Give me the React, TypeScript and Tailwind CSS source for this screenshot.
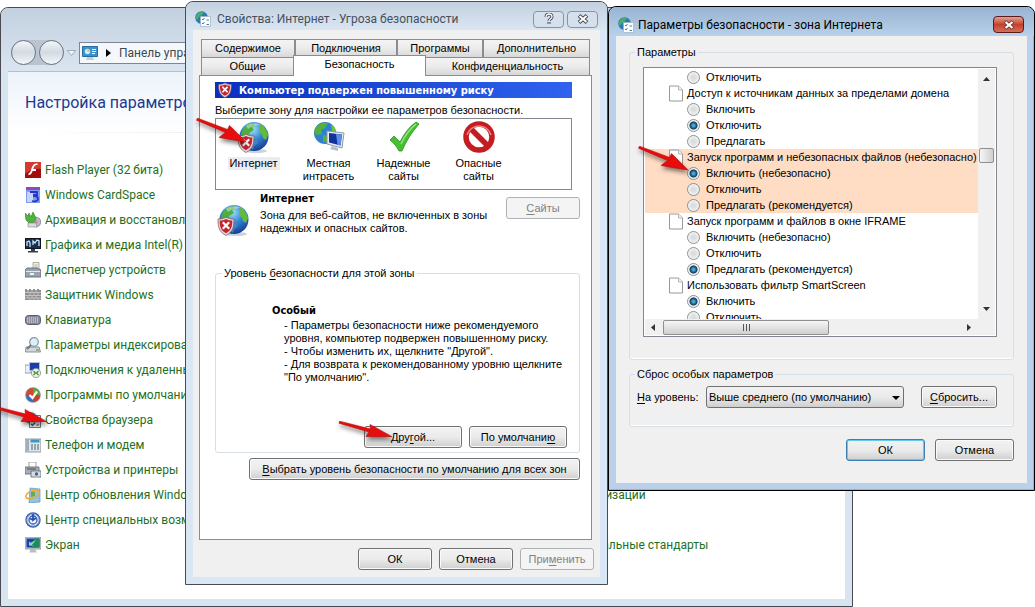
import type { ReactNode } from 'react';
import clsx from 'clsx';

/* ---------- Icons ---------- */

function Globe({ className }: { className?: string }) {
  return (
    <svg viewBox="0 0 32 32" className={className} aria-hidden="true">
      <defs>
        <radialGradient id="globe-sea" cx="0.45" cy="0.25" r="0.8">
          <stop offset="0" stopColor="#9fe0fb" />
          <stop offset="0.45" stopColor="#3588d6" />
          <stop offset="1" stopColor="#10348c" />
        </radialGradient>
      </defs>
      <ellipse cx="18" cy="30" rx="11" ry="2" fill="#c9d3dc" />
      <circle cx="16" cy="15.500" r="14.500" fill="url(#globe-sea)" />
      <path d="M5 8c3-4 7-6 11-6l1 3-3 1 2 3-5 3-1 4-4 1-3-2z" fill="#4fae3a" />
      <path d="M12 17l6 1 2 4-4 3-1 4-3-3z" fill="#3f86c8" />
      <path d="M22 3c4 2 7 6 8 11l-2 5-3-2-1-4-3-1 1-4z" fill="#63bb3c" />
      <path d="M8 5c4-3 10-3 15-1-4 0-9 1-13 4z" fill="#fff" opacity="0.4" />
    </svg>
  );
}

function Shield({ className }: { className?: string }) {
  return (
    <svg viewBox="0 0 20 20" className={className} aria-hidden="true">
      <path d="M10 1c2 1.500 5 2 8 2 0 8-1 13-8 16.500C3 16 2 11 2 3c3 0 6-.5 8-2z" fill="#d8d8dc" stroke="#8a4a4a" strokeWidth="0.700" />
      <path d="M10 3c2 1 4 1.500 6.300 1.600 0 6-1 10-6.300 12.700C4.700 14.600 3.700 10.600 3.700 4.600 6 4.500 8 4 10 3z" fill="#c4242c" />
      <path d="M6.800 6.200l6.400 6.600M13.200 6.200l-6.400 6.600" stroke="#fff" strokeWidth="2.200" />
    </svg>
  );
}

function InternetIcon() {
  return (
    <span className="relative block size-8">
      <Globe className="size-8" />
      <Shield className="absolute bottom-0 left-[-2px] size-5" />
    </span>
  );
}

function IntranetIcon() {
  return (
    <svg viewBox="0 0 32 32" className="size-8" aria-hidden="true">
      <circle cx="12" cy="12" r="11" fill="#2f80ce" />
      <path d="M3 6c3-4 8-5 12-4l-3 5-4 2 1 4-5 1-3-3z" fill="#54b13c" />
      <path d="M10 14l5 1-1 5-4 2z" fill="#54b13c" />
      <path d="M18 3l4 4 1 4-4-1z" fill="#6cc24a" />
      <path d="M14 10l17 2-2 15-15-4z" fill="#e8ebf0" stroke="#8f99a6" />
      <path d="M16 12l13 1.500-1.500 11L16 21.500z" fill="#14309c" />
      <path d="M23 13l6 .6-1.500 11-3-.8z" fill="#5a8ee6" />
      <path d="M19 25l6 2v3l-8-2z" fill="#b7bfca" />
    </svg>
  );
}

function TrustedIcon() {
  return (
    <svg viewBox="0 0 32 32" className="size-8" aria-hidden="true">
      <path d="M2 19l4-4 6 6C16 13 21 6 28 1l3 2C24 11 18 20 14 30h-3C9 26 6 22 2 19z" fill="#45c02f" stroke="#2c8f22" strokeWidth="0.800" />
      <path d="M13 23C17 14 22 8 28 3" stroke="#9be486" strokeWidth="1.500" fill="none" />
    </svg>
  );
}

function RestrictedIcon() {
  return (
    <svg viewBox="0 0 32 32" className="size-8" aria-hidden="true">
      <circle cx="16" cy="16" r="13" fill="#fff" stroke="#c31d22" strokeWidth="5.500" />
      <path d="M7 7l18 18" stroke="#c31d22" strokeWidth="5.500" />
      <path d="M4 14A12.500 12.500 0 0 1 28 14" fill="none" stroke="#ea8a8a" strokeWidth="1.500" />
    </svg>
  );
}

function InternetOptionsIcon() {
  return (
    <svg viewBox="0 0 16 16" className="size-4" aria-hidden="true">
      <circle cx="6.500" cy="6.500" r="6.300" fill="#2a78b8" />
      <path d="M2 3c2-2 5-3 7-2L7 4 4 6 2 9 .5 7z" fill="#49ad6b" />
      <path d="M5.500 5.500h10v10h-10z" fill="#fafcfd" stroke="#9fb2bf" strokeWidth="0.700" />
      <path d="M7 8l1 1 1.500-2M7 12l1 1 1.500-2M11.500 9h2.500M11.500 13.500h2.500" stroke="#3a6f95" strokeWidth="0.900" fill="none" />
    </svg>
  );
}

function PageIcon() {
  return (
    <svg viewBox="0 0 14 17" className="h-[17px] w-[14px] shrink-0" aria-hidden="true">
      <path d="M.5 1h9l4 4v11h-13z" fill="#fff" stroke="#8d8d8d" strokeWidth="0.900" />
      <path d="M9.500 1v4h4" fill="#eee" stroke="#a8a8a8" strokeWidth="0.800" />
    </svg>
  );
}

function ControlPanelIcon() {
  return (
    <svg viewBox="0 0 16 16" className="size-4" aria-hidden="true">
      <path d="M.5 1.500h15v10h-15z" fill="#3a93cf" stroke="#2b6c9e" />
      <circle cx="5.500" cy="6.500" r="2.700" fill="#cfeaf9" />
      <path d="M5.500 3.800v2.700h2.700" fill="#f0a93a" />
      <path d="M10 4.500h4M10 6.500h4M10 8.500h3" stroke="#fff" strokeWidth="1" />
      <path d="M5 12h6l1 3H4z" fill="#c3ced8" />
    </svg>
  );
}

const appletIcons: Record<string, ReactNode> = {
  flash: (
    <>
      <path d="M0 0h16v16H0z" fill="#a30d0d" />
      <path d="M0 0h16v7C10 6 5 8 0 12z" fill="#d53a32" />
      <path d="M12.500 3c-3 0-3.500 2-4.200 4h2.700v2H7.600c-.8 2.500-1.800 4-4.100 4.200v-2c1.500-.2 2-1.500 2.700-3.700C7.200 4 8.500 1.200 12.500 1.200z" fill="#fff" />
    </>
  ),
  card: (
    <>
      <path d="M1 0h14v16H1z" fill="#7f9bef" />
      <path d="M1 0h14v3H1z" fill="#8a4bc0" />
      <path d="M2 5h6v10H2z" fill="#c6d4fb" />
      <path d="M5 5h7v3H9v1c3 0 4 1 4 3s-3 3-6 2" fill="none" stroke="#2434c4" strokeWidth="1.800" />
    </>
  ),
  backup: (
    <>
      <circle cx="11" cy="10" r="4.800" fill="#b9bcc2" stroke="#71757c" strokeWidth="0.700" />
      <circle cx="11" cy="10" r="1.500" fill="#d97b9c" />
      <path d="M0 1l3 3 1-3 2 4 2-5 2 4 1 3-3 4H4L1 8z" fill="#4db53a" stroke="#2e8227" strokeWidth="0.600" />
      <path d="M3 11h8l1 4H3z" fill="#d9dbde" stroke="#83868c" strokeWidth="0.600" />
    </>
  ),
  graphics: (
    <>
      <path d="M0 1h16v11H0z" fill="#10151f" />
      <path d="M1 2h14v9H1z" fill="#16304f" />
      <path d="M2 9V5l2-1 1 2v4M8 8V4l2 2 2-3 2 1v5" fill="none" stroke="#cde8f6" strokeWidth="1.300" />
      <path d="M6 12h4v2h3v1.500H3V14h3z" fill="#3a3f4a" />
    </>
  ),
  device: (
    <>
      <path d="M8 .5h6v8H8z" fill="#eef0ea" stroke="#9a9a90" strokeWidth="0.800" />
      <path d="M9.500 2h3v4h-3z" fill="#d6d3b2" />
      <path d="M0 8l2-2h10l4 2v7H0z" fill="#9aa4b0" stroke="#565e68" strokeWidth="0.800" />
      <path d="M1 9.500h14" stroke="#e4e9ee" />
      <path d="M5 11h4v2H5z" fill="#eef2f6" />
    </>
  ),
  firewall: (
    <>
      <path d="M0 2h2v1h2V2h2v1h2V2h2v1h2V2h2v1h2v10H0z" fill="#8f8f8f" />
      <path d="M0 5.500h16M0 8.500h16M0 11h16M3 3v2.500M7 3v2.500M11 3v2.500M5 5.500v3M9 5.500v3M13 5.500v3M3 8.500V11M7 8.500V11M11 8.500V11M5 11v2M9 11v2M13 11v2" stroke="#d6d6d6" strokeWidth="0.700" />
    </>
  ),
  keyboard: (
    <>
      <rect x="0.500" y="3.500" width="15" height="9" rx="3" fill="#85889a" stroke="#595c6c" />
      <path d="M2 6h12M2 8h12M2 10h12" stroke="#e8e9ef" strokeWidth="1" strokeDasharray="1.200 0.800" />
    </>
  ),
  index: (
    <>
      <path d="M1 10h13l1.500 5H.5z" fill="#d4d7da" stroke="#74787d" strokeWidth="0.800" />
      <circle cx="9" cy="5" r="4.300" fill="#d9effb" stroke="#8c959d" strokeWidth="1.200" />
      <path d="M6 8l-4 4" stroke="#70767d" strokeWidth="1.800" />
      <path d="M11 13h3" stroke="#3d9140" />
    </>
  ),
  remote: (
    <>
      <path d="M0 3h6v8H0z" fill="#eef0f4" stroke="#7d8794" strokeWidth="0.800" />
      <path d="M4 0h11v9H4z" fill="#b9c3d8" />
      <path d="M5 1h9v7H5z" fill="#1c3baf" />
      <circle cx="11" cy="11" r="4.600" fill="#e9efe6" stroke="#879586" strokeWidth="0.800" />
      <path d="M8.500 9l2 2-2 2M13.500 9l-2 2 2 2" stroke="#3a8d3c" strokeWidth="1.200" fill="none" />
    </>
  ),
  programs: (
    <>
      <circle cx="8" cy="8" r="7.800" fill="#8a9299" />
      <path d="M8 8V1A7 7 0 0 0 1 8z" fill="#d7462f" />
      <path d="M8 8H1a7 7 0 0 0 7 7z" fill="#2f6fd0" />
      <path d="M8 8V1a7 7 0 0 1 7 7z" fill="#55a83a" />
      <path d="M8 8h7a7 7 0 0 1-7 7z" fill="#c9402c" />
      <path d="M4.500 8l3 3L12 4.500" stroke="#fff" strokeWidth="2.200" fill="none" />
    </>
  ),
  browser: (
    <>
      <circle cx="6" cy="6" r="6" fill="#5c8f98" />
      <path d="M4.500 3.500h11v12h-11z" fill="#e5eaed" stroke="#69747c" />
      <path d="M6 7l1.500 2L10 5.500M6 12l1.500 1.500L10 10.500M11.500 8.500H14M11.500 13H14" stroke="#3e5561" strokeWidth="1.200" fill="none" />
    </>
  ),
  phone: (
    <>
      <path d="M0 2h16v13H0z" fill="#dde6ec" stroke="#77858f" strokeWidth="0.800" />
      <path d="M1 2h3v12H1z" fill="#9fb0bc" />
      <path d="M5.500 2.500h9v3h-9z" fill="#3f96c2" />
      <path d="M6 8h9M6 10h9M6 12h9" stroke="#52626d" strokeWidth="1.200" strokeDasharray="2 1" />
    </>
  ),
  printer: (
    <>
      <path d="M4 0h7v6H4z" fill="#fff" stroke="#868b92" strokeWidth="0.800" />
      <path d="M0 5h14v7H0z" fill="#a9afb8" stroke="#5a6069" strokeWidth="0.800" />
      <path d="M2 7h9" stroke="#434850" />
      <path d="M6 9h10v6H6z" fill="#d8dce2" stroke="#5a6069" strokeWidth="0.800" />
      <circle cx="11.500" cy="12" r="2.200" fill="#49688c" stroke="#eef2f5" strokeWidth="0.700" />
    </>
  ),
  update: (
    <>
      <path d="M5 1l10 1v13l-11 1z" fill="#8fc3e8" stroke="#5c98c6" strokeWidth="0.700" />
      <path d="M6 4l4 1v4l-4 1z" fill="#67ac4a" />
      <ellipse cx="7.500" cy="7.500" rx="7" ry="3.600" transform="rotate(-22 7.500 7.500)" fill="none" stroke="#eda933" strokeWidth="1.500" />
    </>
  ),
  access: (
    <>
      <circle cx="8" cy="8" r="7.700" fill="#3c62ae" />
      <circle cx="8" cy="8" r="6" fill="#eef3fb" stroke="#92acdb" />
      <circle cx="8" cy="8" r="4" fill="none" stroke="#3159b4" strokeWidth="1.300" />
      <path d="M8 2v6l3-2M8 8L5 6.500" stroke="#2850aa" strokeWidth="1.800" fill="none" />
    </>
  ),
  display: (
    <>
      <path d="M0 0h16v12H0z" fill="#c6ccd0" stroke="#868d93" strokeWidth="0.800" />
      <path d="M1.500 1.500h13v9h-13z" fill="#1a3fb4" />
      <path d="M9 1.500h5.500v9H7z" fill="#1f8a62" />
      <path d="M4 8.500V4.500l1.500 1.300L11 3 7 8l1.500 1z" fill="#7de884" />
      <path d="M6 12h4l2 3.500H4z" fill="#b9bec2" />
    </>
  ),
};

/* ---------- Shared controls ---------- */

// "&" marks the underlined access key
function Mnemonic({ text }: { text: string }) {
  const at = text.indexOf('&');
  if (at < 0) return <>{text}</>;
  return (
    <>
      {text.slice(0, at)}
      <span className="underline underline-offset-2">{text[at + 1]}</span>
      {text.slice(at + 2)}
    </>
  );
}

interface ButtonProps {
  text: string;
  className?: string;
  disabled?: boolean;
  primary?: boolean;
}

function DialogButton({ text, className, disabled, primary }: ButtonProps) {
  return (
    <button
      type="button"
      disabled={disabled}
      className={clsx(
        'h-[22px] shrink-0 rounded-[3px] border whitespace-nowrap',
        disabled
          ? 'border-[#adb2b5] bg-[#f4f4f4] text-[#838383]'
          : 'bg-linear-to-b from-[#f2f2f2] via-[#ebebeb] via-50% to-[#cfcfcf]',
        !disabled && (primary ? 'border-[#3c7fb1] shadow-[inset_0_0_0_1px_#5fc9ee]' : 'border-[#707070] shadow-[inset_0_0_0_1px_#fafafa]'),
        className,
      )}
    >
      <Mnemonic text={text} />
    </button>
  );
}

function RedArrow({ className, shallow }: { className?: string; shallow?: boolean }) {
  return (
    <svg viewBox="0 0 56 28" className={clsx('pointer-events-none absolute z-40 h-7 w-14 drop-shadow-[1px_3px_2px_rgba(0,0,0,0.5)]', className)} aria-hidden="true">
      <path
        d={shallow ? 'M2 2.200L2.500.2 33.500 8l-.5-4.500L55 15.700 29 15.500l3-4.500z' : 'M1.500 2.200L2.500.2 32.500 11.500 34.500 7.500 51 24 24 19.500l6.500-5z'}
        fill="#e80c0c"
        stroke="#b40c0c"
        strokeWidth="0.600"
      />
    </svg>
  );
}

/* ---------- Control panel window ---------- */

const applets = [
  { icon: 'flash', label: 'Flash Player (32 бита)' },
  { icon: 'card', label: 'Windows CardSpace' },
  { icon: 'backup', label: 'Архивация и восстановление' },
  { icon: 'graphics', label: 'Графика и медиа Intel(R)' },
  { icon: 'device', label: 'Диспетчер устройств' },
  { icon: 'firewall', label: 'Защитник Windows' },
  { icon: 'keyboard', label: 'Клавиатура' },
  { icon: 'index', label: 'Параметры индексирования' },
  { icon: 'remote', label: 'Подключения к удаленным' },
  { icon: 'programs', label: 'Программы по умолчанию' },
  { icon: 'browser', label: 'Свойства браузера' },
  { icon: 'phone', label: 'Телефон и модем' },
  { icon: 'printer', label: 'Устройства и принтеры' },
  { icon: 'update', label: 'Центр обновления Windows' },
  { icon: 'access', label: 'Центр специальных возможностей' },
  { icon: 'display', label: 'Экран' },
];

function ControlPanelWindow() {
  return (
    <section className="absolute top-[7px] bottom-0 left-0 flex w-[853px] flex-col rounded-t-lg border border-[#4a4a52] bg-[#d9e4f1] px-[7px] pb-[7px] font-['Roboto','Noto_Sans',sans-serif] text-xs">
      <header className="-mx-[7px] flex h-[63px] items-end rounded-t-lg bg-linear-to-b from-[#c3d0df] to-[#dae5f1] pr-4 pb-1.5 pl-2.5">
        <div className="flex flex-1 items-center">
          <div className="flex gap-[3px] rounded-full bg-[#b9c4d0]">
            <button type="button" aria-label="Назад" className="size-[25px] rounded-full border border-[#6c7682] bg-linear-to-b from-[#f3f6f9] via-[#d3dae2] to-[#f3f7fa]" />
            <button type="button" aria-label="Вперед" className="size-[25px] rounded-full border border-[#6c7682] bg-linear-to-b from-[#f3f6f9] via-[#d3dae2] to-[#f3f7fa]" />
          </div>
          <svg viewBox="0 0 9 6" className="mx-[3px] h-1.5 w-[9px]" aria-hidden="true">
            <path d="M.5.5h8l-4 5z" fill="#f4f8fb" stroke="#8799ab" strokeWidth="0.800" />
          </svg>
          <div className="flex h-[22px] flex-1 items-center border border-[#7d8793] bg-[#f4f8fc] pl-0.5 text-[#3f4750]">
            <ControlPanelIcon />
            <svg viewBox="0 0 5 8" className="mr-2 ml-2 h-2 w-[5px]" aria-hidden="true">
              <path d="M0 0l5 4-5 4z" fill="#000" />
            </svg>
            Панель управления
          </div>
        </div>
      </header>
      <main className="flex-1 border-t border-[#b4c0cd] bg-white">
        <div className="bg-linear-to-b from-[#edf3fb] to-white pt-[19px] pl-[17px]">
          <h1 className="text-base leading-6 text-[#1a3b8f]">Настройка параметров компьютера</h1>
          <div className="mt-[17px] h-px bg-linear-to-r from-white via-[#d5dbe2] to-white" />
        </div>
        <div className="grid grid-cols-[476px_1fr] pt-6 pl-[17px]">
          <ul>
            {applets.map(({ icon, label }) => (
              <li key={icon} className="flex h-[25px] items-center gap-1">
                <svg viewBox="0 0 16 16" className="size-4 shrink-0" aria-hidden="true">
                  {appletIcons[icon]}
                </svg>
                <a href="#" className="whitespace-nowrap text-[#1e7022]">{label}</a>
              </li>
            ))}
          </ul>
          <ul className="grid auto-rows-[25px] pl-5">
            <li className="row-start-14 flex items-center">
              <a href="#" className="text-[#1e7022]">Центр синхронизации</a>
            </li>
            <li className="row-start-16 flex items-center">
              <a href="#" className="text-[#1e7022]">Язык и региональные стандарты</a>
            </li>
          </ul>
        </div>
      </main>
    </section>
  );
}

/* ---------- Internet properties window ---------- */

const zones = [
  { label: 'Интернет', icon: <InternetIcon />, active: true },
  { label: 'Местная интрасеть', icon: <IntranetIcon /> },
  { label: 'Надежные сайты', icon: <TrustedIcon /> },
  { label: 'Опасные сайты', icon: <RestrictedIcon /> },
];

function Tab({ label, active }: { label: string; active?: boolean }) {
  return (
    <button
      type="button"
      role="tab"
      aria-selected={!!active}
      className={clsx(
        'border border-b-0 border-[#898c95]',
        active ? 'z-10 -mx-px -mt-0.5 -mb-px bg-white pb-1' : 'bg-linear-to-b from-[#f4f4f4] via-[#ebebeb] via-50% to-[#d8d8d8]',
      )}
    >
      {label}
    </button>
  );
}

function PropertiesWindow() {
  return (
    <section className="absolute top-px left-[185px] z-10 w-[423px] rounded-t-lg border border-[#4a4a52] bg-[#d9e6f3] px-[7px] pb-[7px]">
      <header className="-mx-[7px] flex h-7 items-center rounded-t-lg bg-linear-to-b from-[#c3d0df] to-[#dae6f2] px-[9px] pt-1.5 font-['Roboto','Noto_Sans',sans-serif] text-xs text-[#46505c]">
        <InternetOptionsIcon />
        <h2 className="ml-1.5 flex-1">Свойства: Интернет - Угроза безопасности</h2>
        <div className="flex gap-[3px]">
          <button type="button" aria-label="Справка" className="flex h-[17px] w-[31px] items-center justify-center rounded-sm border border-[#8794a3] bg-[#d5e0ec]">
            <svg viewBox="0 0 10 12" className="h-3 w-2.5" aria-hidden="true">
              <path d="M2 4c0-4 6-4 6 0 0 2-3 2-3 4M5 9v2" stroke="#3f4852" strokeWidth="3" fill="none" />
              <path d="M2 4c0-4 6-4 6 0 0 2-3 2-3 4M5 9.500v1.300" stroke="#fff" strokeWidth="1.300" fill="none" />
            </svg>
          </button>
          <button type="button" aria-label="Закрыть" className="flex h-[17px] w-[31px] items-center justify-center rounded-sm border border-[#8794a3] bg-[#d5e0ec]">
            <svg viewBox="0 0 12 10" className="h-2.5 w-3" aria-hidden="true">
              <path d="M2 1.500l8 7M10 1.500l-8 7" stroke="#3f4852" strokeWidth="3.800" />
              <path d="M2.500 2l7 6M9.500 2l-7 6" stroke="#fff" strokeWidth="2" />
            </svg>
          </button>
        </div>
      </header>

      <div className="bg-[#f0f0f0] px-1.5 pt-[9px] pb-[7px]">
        <div role="tablist" className="mr-1 ml-0.5">
          <div className="grid h-[18px] grid-cols-[94fr_102fr_86fr_107fr]">
            <Tab label="Содержимое" />
            <Tab label="Подключения" />
            <Tab label="Программы" />
            <Tab label="Дополнительно" />
          </div>
          <div className="grid h-[18px] grid-cols-[93fr_131fr_165fr]">
            <Tab label="Общие" />
            <Tab label="Безопасность" active />
            <Tab label="Конфиденциальность" />
          </div>
        </div>

        <div role="tabpanel" className="mr-0.5 flex flex-col border border-[#898c95] bg-white pt-1.5 pr-[11px] pb-[59px] pl-[15px]">
          <div className="mr-2 flex h-4 items-center gap-1.5 bg-linear-to-r from-[#0a2fc0] to-[#2f62ee] pl-0.5 font-['DejaVu_Sans_Condensed',sans-serif] font-bold text-white">
            <Shield className="size-4" />
            <p>Компьютер подвержен повышенному риску</p>
          </div>
          <p className="mt-1 leading-4">Выберите зону для настройки ее параметров безопасности.</p>
          <div className="mr-2 flex h-[72px] items-start border border-[#828790] pt-0.5">
            {zones.map(({ label, icon, active }) => (
              <button key={label} type="button" className="flex w-[75px] flex-col items-center gap-1 px-2">
                {icon}
                <span className={clsx('px-0.5', active && 'bg-[#ebebf2]')}>{label}</span>
              </button>
            ))}
          </div>

          <div className="flex">
            <div className="mt-3.5 mr-2.5 ml-[3px]">
              <InternetIcon />
            </div>
            <div className="flex-1 pt-0.5">
              <h3 className="font-['DejaVu_Sans_Condensed',sans-serif] font-bold">Интернет</h3>
              <p className="mt-1 whitespace-nowrap">
                Зона для веб-сайтов, не включенных в зоны
                <br />
                надежных и опасных сайтов.
              </p>
            </div>
            <DialogButton text="&Сайты" disabled className="mt-[7px] w-[74px]" />
          </div>

          <fieldset className="mt-[31px] min-w-0 rounded-[3px] border border-[#d5dfe5] pr-3 pb-1">
            <legend className="ml-1.5 px-0.5">
              <Mnemonic text="Уровень &безопасности для этой зоны" />
            </legend>
            <div className="pt-6 pl-14">
              <h3 className="font-['DejaVu_Sans_Condensed',sans-serif] font-bold">Особый</h3>
              <p className="mt-0.5 pl-3 whitespace-nowrap">
                - Параметры безопасности ниже рекомендуемого
                <br />
                уровня, компьютер подвержен повышенному риску.
                <br />
                - Чтобы изменить их, щелкните "Другой".
                <br />
                - Для возврата к рекомендованному уровню щелкните
                <br />
                "По умолчанию".
              </p>
            </div>
            <div className="mt-[42px] flex justify-end gap-[7px]">
              <DialogButton text="Дру&гой..." className="w-[98px]" />
              <DialogButton text="По умолчани&ю" className="w-[98px]" />
            </div>
          </fieldset>
          <DialogButton text="&Выбрать уровень безопасности по умолчанию для всех зон" className="mt-[5px] w-[331px] self-end" />
        </div>

        <footer className="mt-2 flex justify-end gap-[7px]">
          <DialogButton text="ОК" className="w-[74px]" />
          <DialogButton text="Отмена" className="w-[74px]" />
          <DialogButton text="При&менить" disabled className="w-[74px]" />
        </footer>
      </div>
    </section>
  );
}

/* ---------- Security settings window ---------- */

interface SettingGroup {
  title?: string;
  options: string[];
  selected: number;
  highlighted?: boolean;
}

const settings: SettingGroup[] = [
  { options: ['Отключить'], selected: -1 },
  { title: 'Доступ к источникам данных за пределами домена', options: ['Включить', 'Отключить', 'Предлагать'], selected: 1 },
  {
    title: 'Запуск программ и небезопасных файлов (небезопасно)',
    options: ['Включить (небезопасно)', 'Отключить', 'Предлагать (рекомендуется)'],
    selected: 0,
    highlighted: true,
  },
  {
    title: 'Запуск программ и файлов в окне IFRAME',
    options: ['Включить (небезопасно)', 'Отключить', 'Предлагать (рекомендуется)'],
    selected: 2,
  },
  { title: 'Использовать фильтр SmartScreen', options: ['Включить', 'Отключить'], selected: 0 },
];

function SettingsTree() {
  return (
    <div className="h-[250px] min-w-0 flex-1 overflow-hidden">
      {settings.map((group, g) => (
        <div key={g} className={clsx(group.highlighted && 'bg-[#ffdcc4]')}>
          {group.title && (
            <div className="flex h-4 items-center gap-1 pl-6 whitespace-nowrap">
              <PageIcon />
              {group.title}
            </div>
          )}
          {group.options.map((option, i) => (
            <label key={option} className="flex h-4 items-center gap-1.5 pl-[42px] whitespace-nowrap">
              <input
                type="radio"
                name={`setting-${g}`}
                defaultChecked={i === group.selected}
                className="size-[13px] shrink-0 appearance-none rounded-full border border-[#8e8f8f] bg-radial from-[#d5d9dc] to-[#f6f6f6] shadow-[inset_0_0_0_1px_#f4f4f4] checked:from-[#4fb0d8] checked:from-10% checked:via-[#123f63] checked:via-45% checked:to-[#f4f4f4] checked:to-60%"
              />
              {option}
            </label>
          ))}
        </div>
      ))}
    </div>
  );
}

function SecurityWindow() {
  return (
    <section className="absolute top-1.5 left-[608px] z-20 w-[427px] rounded-t-lg border border-black bg-[#b9d1ea] px-[7px] pb-[7px] shadow-[inset_-1px_-1px_0_#5fc8e6]">
      <header className="-mx-[7px] flex h-[29px] items-center rounded-t-lg bg-linear-to-b from-[#98b4d2] to-[#b9d1ea] pt-1.5 pr-2.5 pl-[9px] font-['Roboto','Noto_Sans',sans-serif] text-xs">
        <InternetOptionsIcon />
        <h2 className="ml-1 flex-1">Параметры безопасности - зона Интернета</h2>
        <button type="button" aria-label="Закрыть" className="flex h-[17px] w-[31px] items-center justify-center rounded-sm border border-[#5a1a18] bg-linear-to-b from-[#e0a095] via-[#c4402c] via-50% to-[#d4705a]">
          <svg viewBox="0 0 12 10" className="h-2.5 w-3" aria-hidden="true">
            <path d="M2 1.500l8 7M10 1.500l-8 7" stroke="#5c3434" strokeWidth="3.600" />
            <path d="M2.500 2l7 6M9.500 2l-7 6" stroke="#fff" strokeWidth="2.200" />
          </svg>
        </button>
      </header>

      <div className="bg-[#f0f0f0] px-[13px] pt-2.5 pb-[22px]">
        <fieldset className="min-w-0 rounded-[3px] border border-[#d5dfe5] pt-2 pr-4 pb-[22px] pl-[13px] shadow-[inset_0_-1px_0_#fff]">
          <legend className="-ml-2 px-0.5">Параметры</legend>
          <div className="border border-[#828790] bg-white p-px">
            <div className="flex">
              <SettingsTree />
              <div className="flex w-[17px] shrink-0 flex-col items-center bg-[#f0f0f0] py-2">
                <svg viewBox="0 0 7 4" className="h-1 w-[7px]" aria-hidden="true">
                  <path d="M3.500 0L7 4H0z" fill="#333" />
                </svg>
                <div className="mt-[67px] h-[15px] w-[15px] rounded-xs border border-[#8f8f8f] bg-linear-to-r from-[#f6f6f6] to-[#cfcfcf]" />
                <svg viewBox="0 0 7 4" className="mt-auto h-1 w-[7px]" aria-hidden="true">
                  <path d="M3.500 4L7 0H0z" fill="#333" />
                </svg>
              </div>
            </div>
            <div className="flex h-4 items-center bg-[#f0f0f0] pl-1.5">
              <svg viewBox="0 0 4 7" className="mr-2 h-[7px] w-1" aria-hidden="true">
                <path d="M0 3.500L4 0v7z" fill="#333" />
              </svg>
              <div className="flex h-[15px] w-[166px] items-center justify-center gap-0.5 rounded-xs border border-[#8f8f8f] bg-linear-to-b from-[#f6f6f6] to-[#cfcfcf]">
                <span className="h-[7px] w-px bg-[#555]" />
                <span className="h-[7px] w-px bg-[#555]" />
                <span className="h-[7px] w-px bg-[#555]" />
              </div>
              <svg viewBox="0 0 4 7" className="mr-6 ml-auto h-[7px] w-1" aria-hidden="true">
                <path d="M4 3.500L0 0v7z" fill="#333" />
              </svg>
            </div>
          </div>
        </fieldset>

        <fieldset className="mt-2 min-w-0 rounded-[3px] border border-[#d5dfe5] pt-[5px] pr-4 pb-[18px] pl-[7px] shadow-[inset_0_-1px_0_#fff]">
          <legend className="-ml-0.5 px-0.5">Сброс особых параметров</legend>
          <div className="flex items-center">
            <label htmlFor="level" className="w-[69px]">
              <Mnemonic text="&На уровень:" />
            </label>
            <div className="relative w-[198px]">
              <select
                id="level"
                className="h-[22px] w-full appearance-none rounded-[3px] border border-[#707070] bg-linear-to-b from-[#f2f2f2] via-[#ebebeb] via-50% to-[#cfcfcf] pl-0.5"
              >
                <option>Выше среднего (по умолчанию)</option>
                <option>Средний</option>
                <option>Высокий</option>
              </select>
              <svg viewBox="0 0 8 4" className="pointer-events-none absolute top-2.5 right-1 h-1 w-2" aria-hidden="true">
                <path d="M0 0h8L4 4z" fill="#000" />
              </svg>
            </div>
            <DialogButton text="&Сбросить..." className="ml-auto w-[76px]" />
          </div>
        </fieldset>

        <footer className="mt-3 flex justify-end gap-2.5">
          <DialogButton text="ОК" primary className="w-[79px]" />
          <DialogButton text="Отмена" className="w-[79px]" />
        </footer>
      </div>
    </section>
  );
}

export default function App() {
  return (
    <div className="relative min-h-screen w-full overflow-hidden bg-white font-['Liberation_Sans',sans-serif] text-[11px] leading-[13px] text-black">
      <ControlPanelWindow />
      <PropertiesWindow />
      <SecurityWindow />
      <RedArrow className="top-[118px] left-[195px]" />
      <RedArrow shallow className="top-[406px] left-[-8px]" />
      <RedArrow shallow className="top-[421px] left-[337px]" />
      <RedArrow className="top-[146px] left-[637px]" />
    </div>
  );
}
